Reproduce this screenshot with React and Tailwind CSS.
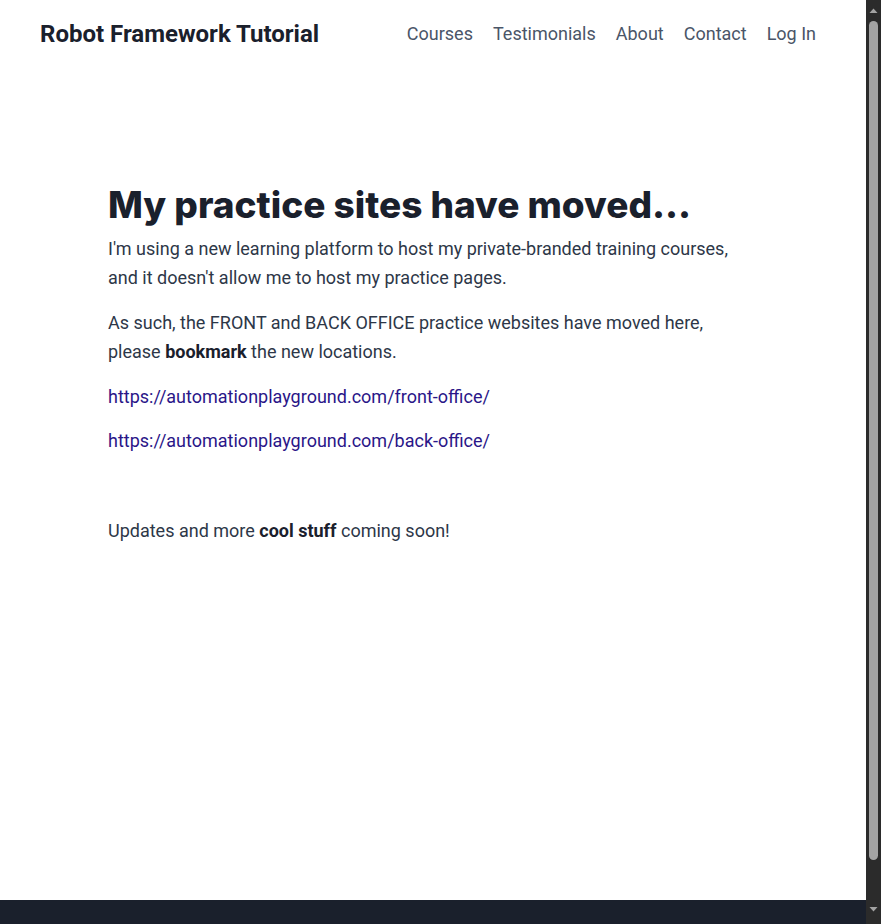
import React from 'react';

const navLinks = ['Courses', 'Testimonials', 'About', 'Contact', 'Log In'];

function FakeScrollbar() {
    return (
        <div className="w-[15px] shrink-0 h-full bg-[#2b2b2b] flex flex-col items-center">
            <svg width="15" height="17" viewBox="0 0 15 17" className="shrink-0">
                <path d="M3.5 13 L7.5 8.5 L11.5 13 Z" fill="#a3a3a3" />
            </svg>
            <div className="w-[9px] flex-1 rounded-full bg-[#a3a3a3] mt-[4px] mb-[43px]" />
            <svg width="15" height="17" viewBox="0 0 15 17" className="shrink-0 mb-[4px]">
                <path d="M3.5 4 L7.5 8.5 L11.5 4 Z" fill="#a3a3a3" />
            </svg>
        </div>
    );
}

export default function App() {
    return (
        <div className="h-[924px] w-full flex overflow-hidden bg-white" style={{ fontFamily: 'Roboto, "Liberation Sans", sans-serif' }}>
            <div className="flex-1 flex flex-col min-w-0">
                <header className="flex items-center justify-between h-[67px] pl-10 pr-[50px]">
                    <a className="text-[24px] font-bold text-[#1a202c]">Robot Framework Tutorial</a>
                    <nav className="flex items-center gap-5 text-[18px] text-[#4a5568]">
                        {navLinks.map((link) => (
                            <a key={link} className="cursor-pointer hover:text-[#1a202c]">{link}</a>
                        ))}
                    </nav>
                </header>

                <main className="flex-1">
                    <div className="max-w-[650px] mx-auto pt-[116px] text-[18px] leading-[1.6] text-[#2d3748]">
                        <h1 className="text-[37px] leading-[1.2] font-extrabold text-[#1a202c] mb-[8px]" style={{ fontFamily: 'Inter, "Open Sans", sans-serif' }}>
                            My practice sites have moved...
                        </h1>
                        <p className="mb-4">
                            I'm using a new learning platform to host my private-branded training courses, and it doesn't allow me to host my practice pages.
                        </p>
                        <p className="mb-4">
                            As such, the FRONT and BACK OFFICE practice websites have moved here, please <strong className="font-bold text-[#1a202c]">bookmark</strong> the new locations.
                        </p>
                        <p className="mb-4">
                            <a href="#" className="text-[#2a1688]">https://automationplayground.com/front-office/</a>
                        </p>
                        <p className="mb-4">
                            <a href="#" className="text-[#2a1688]">https://automationplayground.com/back-office/</a>
                        </p>
                        <p className="mb-4">&nbsp;</p>
                        <p className="mb-4">
                            Updates and more <strong className="font-bold text-[#1a202c]">cool stuff</strong> coming soon!
                        </p>
                    </div>
                </main>

                <footer className="h-6 shrink-0 bg-[#1a202c]" />
            </div>
            <FakeScrollbar />
        </div>
    );
}
